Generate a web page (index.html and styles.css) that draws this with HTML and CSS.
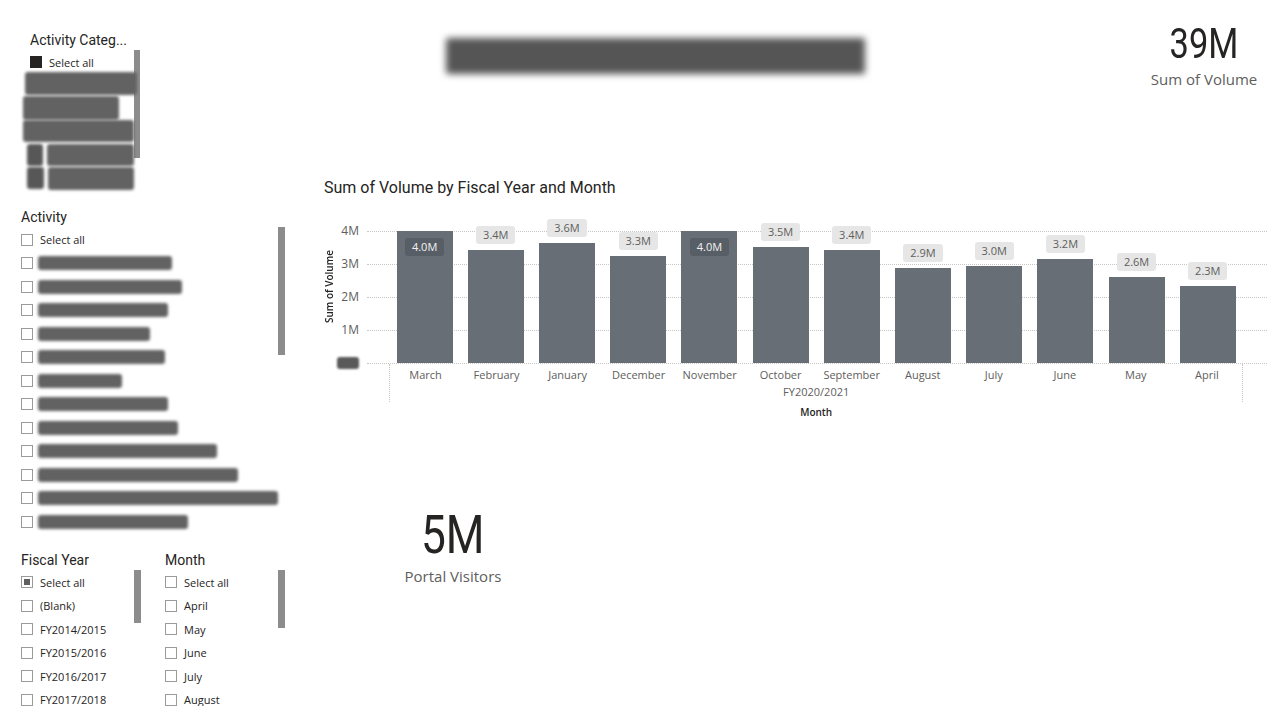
FILE: index.html
```html
<!DOCTYPE html>
<html lang="en">
<head>
<meta charset="utf-8">
<title>Volume report</title>
<link rel="stylesheet" href="styles.css">
</head>
<body>
<div class="page">
  <aside class="filters">
    <section class="slicer cat">
      <div class="slicer-title">Activity Categ...</div>
      <div class="slicer-body">
        <div class="cat-list">
          <div class="cat-sel"><span class="chk chk-filled"></span><span>Select all</span></div>
          <div class="redact cat-r1"></div>
          <div class="redact cat-r2"></div>
          <div class="redact cat-r3"></div>
          <div class="cat-pair cat-r4"><div class="redact sq"></div><div class="redact txt"></div></div>
          <div class="cat-pair cat-r5"><div class="redact sq"></div><div class="redact txt"></div></div>
        </div>
        <div class="scroll cat-scroll"></div>
      </div>
    </section>

    <section class="slicer act">
      <div class="slicer-title">Activity</div>
      <div class="slicer-body">
        <div class="list act-list">
          <div class="row"><span class="chk"></span><span>Select all</span></div>
          <div class="row"><span class="chk"></span><span class="redact"></span></div>
          <div class="row"><span class="chk"></span><span class="redact"></span></div>
          <div class="row"><span class="chk"></span><span class="redact"></span></div>
          <div class="row"><span class="chk"></span><span class="redact"></span></div>
          <div class="row"><span class="chk"></span><span class="redact"></span></div>
          <div class="row"><span class="chk"></span><span class="redact"></span></div>
          <div class="row"><span class="chk"></span><span class="redact"></span></div>
          <div class="row"><span class="chk"></span><span class="redact"></span></div>
          <div class="row"><span class="chk"></span><span class="redact"></span></div>
          <div class="row"><span class="chk"></span><span class="redact"></span></div>
          <div class="row"><span class="chk"></span><span class="redact"></span></div>
          <div class="row"><span class="chk"></span><span class="redact"></span></div>
        </div>
        <div class="scroll act-scroll"></div>
      </div>
    </section>

    <div class="slicer-pair">
      <section class="slicer fy">
        <div class="slicer-title">Fiscal Year</div>
        <div class="slicer-body">
          <div class="list short-list">
            <div class="row"><span class="chk chk-partial"></span><span>Select all</span></div>
            <div class="row"><span class="chk"></span><span>(Blank)</span></div>
            <div class="row"><span class="chk"></span><span>FY2014/2015</span></div>
            <div class="row"><span class="chk"></span><span>FY2015/2016</span></div>
            <div class="row"><span class="chk"></span><span>FY2016/2017</span></div>
            <div class="row"><span class="chk"></span><span>FY2017/2018</span></div>
          </div>
          <div class="scroll fy-scroll"></div>
        </div>
      </section>
      <section class="slicer month">
        <div class="slicer-title">Month</div>
        <div class="slicer-body">
          <div class="list short-list">
            <div class="row"><span class="chk"></span><span>Select all</span></div>
            <div class="row"><span class="chk"></span><span>April</span></div>
            <div class="row"><span class="chk"></span><span>May</span></div>
            <div class="row"><span class="chk"></span><span>June</span></div>
            <div class="row"><span class="chk"></span><span>July</span></div>
            <div class="row"><span class="chk"></span><span>August</span></div>
          </div>
          <div class="scroll month-scroll"></div>
        </div>
      </section>
    </div>
  </aside>

  <main class="canvas">
    <header class="top">
      <div class="report-title"></div>
      <div class="card card-total">
        <div class="card-num"><span>39M</span></div>
        <div class="card-label">Sum of Volume</div>
      </div>
    </header>

    <section class="chart">
      <div class="chart-title">Sum of Volume by Fiscal Year and Month</div>
      <div class="chart-body">
        <div class="y-title"><span>Sum of Volume</span></div>
        <div class="y-labels">
          <div>4M</div>
          <div>3M</div>
          <div>2M</div>
          <div>1M</div>
          <div><span class="redact zero"></span></div>
        </div>
        <div class="plot">
          <div class="plot-area">
            <div class="gridlines"><div></div><div></div><div></div><div></div><div></div></div>
            <div class="bars">
              <div class="col"><div class="bar" style="height:132px"><span class="lbl">4.0M</span></div></div>
              <div class="col"><span class="lbl">3.4M</span><div class="bar" style="height:113px"></div></div>
              <div class="col"><span class="lbl">3.6M</span><div class="bar" style="height:120px"></div></div>
              <div class="col"><span class="lbl">3.3M</span><div class="bar" style="height:107px"></div></div>
              <div class="col"><div class="bar" style="height:132px"><span class="lbl">4.0M</span></div></div>
              <div class="col"><span class="lbl">3.5M</span><div class="bar" style="height:116px"></div></div>
              <div class="col"><span class="lbl">3.4M</span><div class="bar" style="height:113px"></div></div>
              <div class="col"><span class="lbl">2.9M</span><div class="bar" style="height:95px"></div></div>
              <div class="col"><span class="lbl">3.0M</span><div class="bar" style="height:97px"></div></div>
              <div class="col"><span class="lbl">3.2M</span><div class="bar" style="height:104px"></div></div>
              <div class="col"><span class="lbl">2.6M</span><div class="bar" style="height:86px"></div></div>
              <div class="col"><span class="lbl">2.3M</span><div class="bar" style="height:77px"></div></div>
            </div>
          </div>
          <div class="x-axis">
            <div class="months">
              <span>March</span><span>February</span><span>January</span><span>December</span>
              <span>November</span><span>October</span><span>September</span><span>August</span>
              <span>July</span><span>June</span><span>May</span><span>April</span>
            </div>
            <div class="fy-label">FY2020/2021</div>
          </div>
          <div class="x-title">Month</div>
        </div>
      </div>
    </section>

    <div class="card card-visitors">
      <div class="card-num big"><span>5M</span></div>
      <div class="card-label">Portal Visitors</div>
    </div>
  </main>
</div>
</body>
</html>
```

FILE: styles.css
```css
html, body {
  margin: 0;
  padding: 0;
  background: #ffffff;
}

body {
  font-family: "Open Sans", "Noto Sans", sans-serif;
  color: #252423;
}

.page {
  display: flex;
  width: 1280px;
  height: 720px;
  overflow: hidden;
}

/* ---------- slicers ---------- */
.filters {
  width: 300px;
  flex: none;
  display: flex;
  flex-direction: column;
}

.slicer-title {
  font-family: Roboto, "Liberation Sans", sans-serif;
  font-size: 14px;
  line-height: 18px;
  color: #252423;
  white-space: nowrap;
}

.slicer-body {
  display: flex;
  align-items: flex-start;
}

.scroll {
  flex: none;
  background: #8c8c8c;
}

.chk {
  flex: none;
  width: 12px;
  height: 12px;
  box-sizing: border-box;
  border: 1px solid #9d9b99;
  margin-right: 7px;
  background: #fff;
}

.chk-filled {
  background: #252423;
  border-color: #252423;
}

.chk-partial {
  background: #5f5f5f;
  box-shadow: inset 0 0 0 2px #ffffff;
}

.redact {
  display: block;
  background: #626262;
  filter: blur(1.8px);
  border-radius: 3px;
}

/* first slicer */
.cat {
  margin: 31px 0 0 23px;
}

.cat .slicer-title {
  padding-left: 7px;
}

.cat-list {
  width: 111px;
}

.cat-sel {
  display: flex;
  align-items: center;
  height: 16px;
  margin-top: 5px;
  padding-left: 7px;
  font-size: 11px;
  white-space: nowrap;
}

.cat-r1 { margin: 2px 0 0 2px; width: 112px; height: 23px; }
.cat-r2 { margin: 1px 0 0 0; width: 96px; height: 24px; }
.cat-r3 { margin: 0; width: 111px; height: 22px; }

.cat-pair {
  display: flex;
  gap: 4px;
  margin-left: 4px;
}

.cat-r4 { margin-top: 2px; }
.cat-r5 { margin-top: 1px; }
.cat-pair .sq { width: 17px; height: 22px; background: #575757; }
.cat-r4 .txt { width: 90px; height: 22px; }
.cat-r5 .txt { width: 88px; height: 23px; }

.cat-scroll {
  width: 6px;
  height: 108px;
  margin-top: 1px;
}

/* activity slicer */
.act {
  margin: 18px 0 0 21px;
}

.list {
  padding-top: 2px;
}

.act-list {
  width: 257px;
}

.row {
  display: flex;
  align-items: center;
  height: 23.5px;
  font-size: 11px;
  white-space: nowrap;
  color: #252423;
}

.row .redact {
  height: 14px;
  margin-left: -2px;
}

.act-list .row:nth-child(2) .redact { width: 134px; }
.act-list .row:nth-child(3) .redact { width: 144px; }
.act-list .row:nth-child(4) .redact { width: 130px; }
.act-list .row:nth-child(5) .redact { width: 112px; }
.act-list .row:nth-child(6) .redact { width: 127px; }
.act-list .row:nth-child(7) .redact { width: 84px; }
.act-list .row:nth-child(8) .redact { width: 130px; }
.act-list .row:nth-child(9) .redact { width: 140px; }
.act-list .row:nth-child(10) .redact { width: 179px; }
.act-list .row:nth-child(11) .redact { width: 200px; }
.act-list .row:nth-child(12) .redact { width: 245px; }
.act-list .row:nth-child(13) .redact { width: 150px; }

.act-scroll {
  width: 7px;
  height: 128px;
  margin-top: 1px;
}

/* fiscal year + month */
.slicer-pair {
  display: flex;
  gap: 24px;
  margin: 17px 0 0 21px;
}

.short-list {
  width: 113px;
  height: 137.5px;
  box-sizing: border-box;
  overflow: hidden;
}

.fy-scroll {
  width: 7px;
  height: 53px;
  margin-top: 1.5px;
}

.month-scroll {
  width: 7px;
  height: 58px;
  margin-top: 1.5px;
}

/* ---------- canvas ---------- */
.canvas {
  flex: 1;
  display: flex;
  flex-direction: column;
  min-width: 0;
}

.top {
  flex: none;
  display: flex;
  align-items: flex-start;
  height: 178px;
}

.report-title {
  width: 419px;
  height: 36px;
  margin: 38px 0 0 146px;
  background: #555555;
  filter: blur(3.5px);
  border-radius: 2px;
}

.card {
  width: 140px;
  text-align: center;
}

.card-total {
  margin: 23px 6px 0 auto;
}

.card-num {
  font-family: Roboto, "Liberation Sans", sans-serif;
  font-size: 42px;
  line-height: 42px;
  color: #252423;
}

.card-num span {
  display: inline-block;
  transform: scaleX(0.82);
}

.card-num.big {
  font-size: 54px;
  line-height: 63px;
}

.card-label {
  font-size: 15px;
  line-height: 20px;
  color: #605e5c;
  margin-top: 4px;
  white-space: nowrap;
}

.card-visitors {
  margin: 84px 0 0 83px;
}

.card-visitors .card-label {
  margin-top: 0;
}

/* ---------- chart ---------- */
.chart {
  flex: none;
  margin-left: 24px;
}

.chart-title {
  font-family: Roboto, "Liberation Sans", sans-serif;
  font-size: 16px;
  line-height: 20px;
  color: #252423;
  white-space: nowrap;
}

.chart-body {
  display: flex;
  align-items: flex-start;
  margin-top: 16px;
}

.y-title {
  flex: none;
  width: 11px;
  height: 146px;
  display: flex;
  align-items: center;
  justify-content: center;
}

.y-title span {
  writing-mode: vertical-rl;
  transform: rotate(180deg);
  font-size: 10px;
  font-weight: 600;
  line-height: 11px;
  white-space: nowrap;
  color: #252423;
}

.y-labels {
  flex: none;
  width: 24px;
  margin-right: 8px;
  text-align: right;
  font-size: 12px;
  color: #605e5c;
}

.y-labels > div {
  height: 33px;
  line-height: 33px;
  display: flex;
  align-items: center;
  justify-content: flex-end;
}

.redact.zero {
  width: 22px;
  height: 12px;
  background: #5a5a5a;
  filter: blur(1.2px);
}

.plot {
  flex: none;
  width: 900px;
  padding-top: 17px;
}

.plot-area {
  display: grid;
  grid-template-rows: 133px;
}

.plot-area > * {
  grid-area: 1 / 1;
}

.gridlines > div {
  height: 33px;
  box-sizing: border-box;
  border-top: 1px dotted #c8c6c4;
}

.gridlines > div:last-child {
  height: 1px;
}

.bars {
  margin-left: 22px;
  width: 854.4px;
  height: 132px;
  display: grid;
  grid-template-columns: repeat(12, 1fr);
  grid-template-rows: 132px;
}

.col {
  height: 132px;
  display: flex;
  flex-direction: column;
  align-items: center;
  justify-content: flex-end;
}

.col > * {
  flex: none;
}

.bar {
  width: 56px;
  background: #676e76;
  display: flex;
  justify-content: center;
  align-items: flex-start;
}

.lbl {
  display: block;
  height: 18px;
  line-height: 18px;
  padding: 0 7px;
  border-radius: 3px;
  background: #e6e6e6;
  color: #605e5c;
  font-size: 11px;
  margin-bottom: 6px;
  white-space: nowrap;
}

.bar .lbl {
  background: #575e66;
  color: #f3f2f1;
  margin: 7px 0 0;
}

.x-axis {
  margin-left: 22px;
  width: 854.4px;
  height: 38px;
  box-sizing: border-box;
  border-left: 1px dotted #c8c6c4;
  border-right: 1px dotted #c8c6c4;
}

.months {
  display: grid;
  grid-template-columns: repeat(12, 1fr);
  padding-top: 3px;
  font-size: 11px;
  line-height: 16px;
  text-align: center;
  color: #605e5c;
  white-space: nowrap;
}

.fy-label {
  margin-top: 1px;
  font-size: 11px;
  line-height: 16px;
  text-align: center;
  color: #605e5c;
}

.x-title {
  margin: 3px 0 0 22px;
  width: 854.4px;
  font-size: 10px;
  font-weight: 600;
  line-height: 14px;
  text-align: center;
  color: #252423;
}
```
